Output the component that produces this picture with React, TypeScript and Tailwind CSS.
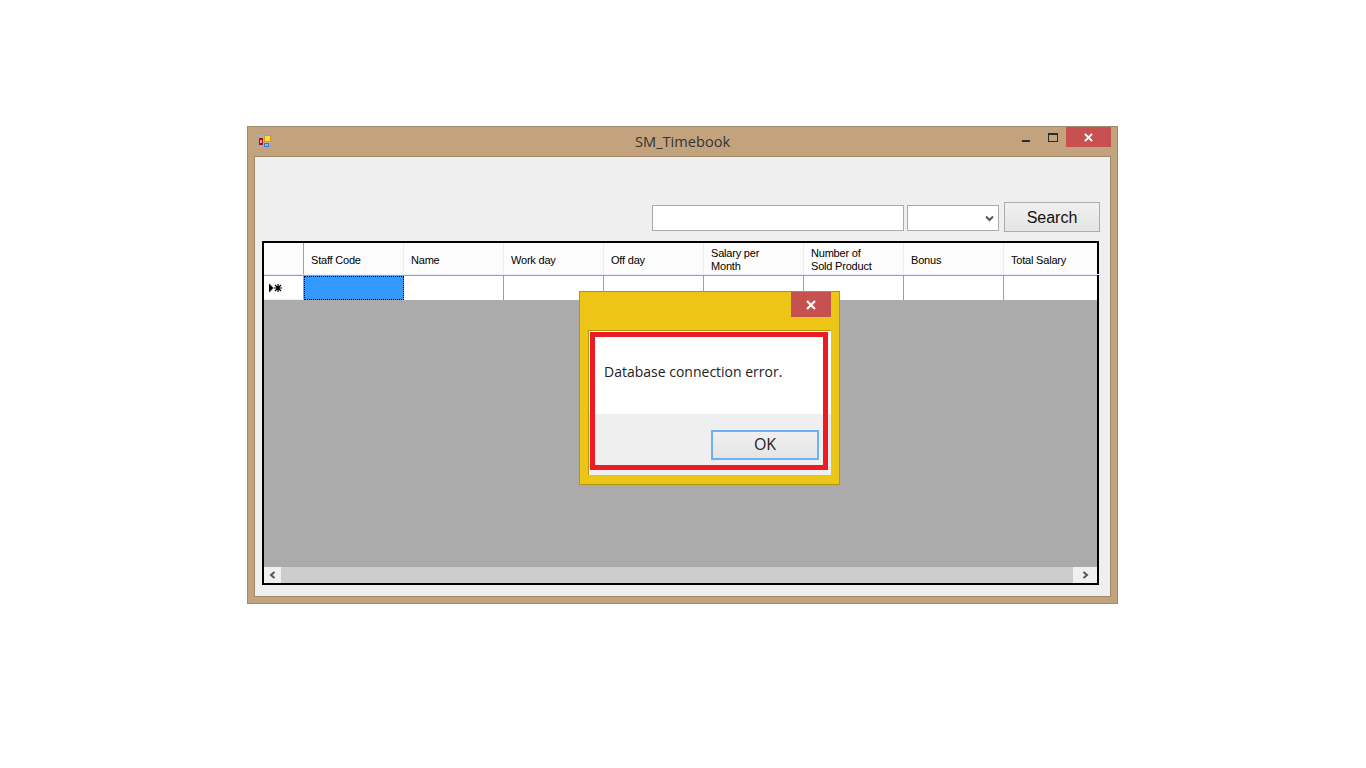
import React from "react";

const cols: React.ReactNode[] = [
  "Staff Code",
  "Name",
  "Work day",
  "Off day",
  <>Salary per<br />Month</>,
  <>Number of<br />Sold Product</>,
  "Bonus",
  "Total Salary",
];

function AppIcon() {
  return (
    <svg width="14" height="14" viewBox="0 0 14 14" className="block">
      <rect x="0.5" y="0.5" width="13" height="13" fill="#c9ad8c" stroke="#aaa8a0" />
      <path d="M0 3.5H5M0 11.5H14M4.5 0V14M12.5 0V14" stroke="#aaa8a0" />
      <rect x="1" y="4" width="4" height="7" fill="#a8141a" />
      <rect x="2" y="6" width="2" height="3" fill="#e8a09a" />
      <rect x="6" y="1" width="7" height="7" fill="#d99a08" />
      <rect x="7" y="2" width="5" height="5" fill="#fcd84a" />
      <rect x="6" y="9" width="5" height="4" fill="#3a78d8" />
      <rect x="7" y="10" width="3" height="2" fill="#8ab8f0" />
    </svg>
  );
}

function CloseX({ size }: { size: number }) {
  return (
    <svg width={size} height={size} viewBox="0 0 10 10" className="block">
      <path d="M1 1L9 9M9 1L1 9" stroke="#fff" strokeWidth="2.2" />
    </svg>
  );
}

export default function App() {
  return (
    <div className="relative h-screen overflow-hidden bg-white pl-[247px] pt-[126px] font-['Liberation_Sans',Arial,sans-serif]">
      {/* window */}
      <div className="flex h-[478px] w-[871px] flex-col border border-[#a08a6c] bg-[#c2a37e]">
        {/* title bar */}
        <div className="flex h-[29px] shrink-0 items-start">
          <div className="ml-[10px] mt-[7px]"><AppIcon /></div>
          <div className="flex-1 pl-[363px] pt-[4px] font-['Open_Sans',sans-serif] text-[14.6px] leading-5 text-[#333]">SM_Timebook</div>
          <div className="mr-[6px] flex items-start">
            <div className="mr-[18px] mt-[13px] h-[2px] w-[8px] bg-[#2b2b2b]" />
            <div className="mr-[8px] mt-[6px] h-[9px] w-[10px] border border-t-2 border-[#2b2b2b]" />
            <div className="flex h-[20px] w-[45px] items-center justify-center bg-[#c75050]"><CloseX size={9} /></div>
          </div>
        </div>

        {/* client */}
        <div className="mx-[6px] mb-[6px] flex flex-1 flex-col border border-[#a08a6c] bg-[#efefef] pl-[7px] pr-[11px]">
          <div className="flex h-[84px] shrink-0 items-start justify-end pt-[45px]">
            <div className="mt-[3px] h-[26px] w-[252px] border border-[#ababab] bg-white" />
            <div className="ml-[3px] mt-[3px] flex h-[26px] w-[92px] items-center justify-end border border-[#ababab] bg-white pr-[4px]">
              <svg width="9" height="7" viewBox="0 0 9 7" className="block"><path d="M1 1.5L4.5 5L8 1.5" fill="none" stroke="#555" strokeWidth="2" /></svg>
            </div>
            <button className="ml-[5px] mr-[-1px] h-[30px] w-[96px] border border-[#acacac] bg-gradient-to-b from-[#f0f0f0] to-[#e5e5e5] pt-[1px] text-[16px] text-[#111]">Search</button>
          </div>

          {/* grid */}
          <div className="flex h-[344px] w-[837px] flex-col border-2 border-black bg-[#ababab]">
            <div className="flex h-[33px] shrink-0 border-b border-b-[#a0a0a0] bg-[#fcfcfc] text-[11px] leading-[13px] tracking-[-0.2px] text-black">
              <div className="w-[40px] shrink-0 border-r border-b border-r-[#a0a0a0] border-b-[#e6eefa]" />
              {cols.map((c, i) => (
                <div key={i} className="flex w-[100px] shrink-0 items-center border-r border-b border-r-[#e6eefa] border-b-[#e6eefa] pl-[7px] pt-[3px]">
                  <div>{c}</div>
                </div>
              ))}
            </div>
            <div className="flex h-[24px] shrink-0 bg-white">
              <div className="flex w-[40px] shrink-0 items-center border-r border-b border-r-[#a0a0a0] border-b-[#e6eefa] pl-[5px] pt-[1px]">
                <svg width="13" height="10" viewBox="0 0 13 10" className="block">
                  <path d="M0 0.5L4.5 5L0 9.5Z" fill="#000" />
                  <path d="M9 1V9M5 5H13M6 2L12 8M12 2L6 8" stroke="#000" strokeWidth="1.2" />
                </svg>
              </div>
              <div className="w-[100px] shrink-0 border border-dotted border-black bg-[#3399ff]" />
              {[0, 1, 2, 3, 4, 5].map((i) => (
                <div key={i} className="w-[100px] shrink-0 border-r border-r-[#a0a0a0]" />
              ))}
              <div className="flex-1" />
            </div>
            <div className="flex-1" />
            <div className="flex h-[16px] shrink-0 items-stretch bg-[#f0f0f0]">
              <div className="flex w-[17px] items-center justify-center">
                <svg width="7" height="8" viewBox="0 0 7 8" className="block"><path d="M5.5 1L2 4L5.5 7" fill="none" stroke="#555" strokeWidth="2" /></svg>
              </div>
              <div className="flex-1 bg-[#cdcdcd]" />
              <div className="flex w-[24px] items-center justify-center">
                <svg width="7" height="8" viewBox="0 0 7 8" className="block"><path d="M1.5 1L5 4L1.5 7" fill="none" stroke="#555" strokeWidth="2" /></svg>
              </div>
            </div>
          </div>
        </div>
      </div>

      {/* message box */}
      <div className="absolute left-[579px] top-[291px] flex h-[194px] w-[261px] flex-col border border-[#b8960a] bg-[#edc516]">
        <div className="flex h-[38px] shrink-0 justify-end pr-[8px]">
          <div className="flex h-[25px] w-[40px] items-center justify-center bg-[#c75050]"><CloseX size={10} /></div>
        </div>
        <div className="ml-[8px] mr-[8px] flex h-[145px] flex-col border border-[#b8960a] border-r-0 border-b-0 bg-[#efefef] pb-[5px]">
          <div className="relative flex flex-1 flex-col">
            <div className="flex h-[83px] items-center bg-white pb-[2px] pl-[15px] font-['Open_Sans',sans-serif] text-[14px] text-[#222]">Database connection error.</div>
            <div className="flex flex-1 justify-end bg-[#efefef] pr-[12px] pt-[16px]">
              <button className="h-[30px] w-[108px] border-2 border-[#6cb0f5] bg-gradient-to-b from-[#f0f0f0] to-[#e5e5e5] pb-[2px] font-['Open_Sans',sans-serif] text-[16px] text-[#222]">OK</button>
            </div>
            <div className="absolute left-[1px] right-[3px] top-[1px] bottom-0 border-[5px] border-[#ed1c24]" />
          </div>
        </div>
      </div>
    </div>
  );
}
